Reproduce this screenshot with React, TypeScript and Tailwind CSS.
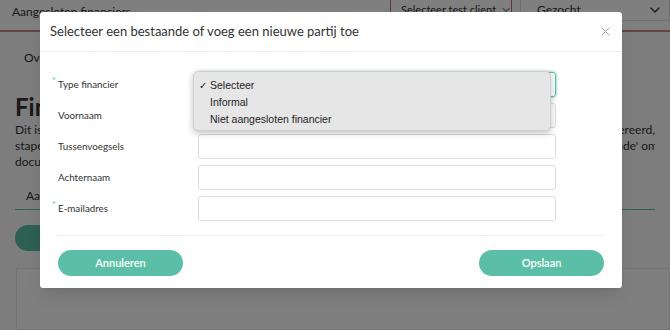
import { X, ChevronDown } from "lucide-react";

const fields = [
  { label: "Type financier", required: true },
  { label: "Voornaam", required: false },
  { label: "Tussenvoegsels", required: false },
  { label: "Achternaam", required: false },
  { label: "E-mailadres", required: true },
];

const options = ["Selecteer", "Informal", "Niet aangesloten financier"];

function BackgroundPage() {
  return (
    <div className="flex h-full w-full flex-col bg-[#fafafa] text-[#333]">
      <div className="flex h-[32px] shrink-0 items-start border-b-2 border-[#c98a8a] bg-white">
        <span className="mt-[3px] ml-[12px] text-[12px]">Aangesloten financiers</span>
        <div className="ml-auto flex">
          <div className="-mt-px flex h-[22px] w-[122px] items-center gap-1 whitespace-nowrap rounded-b border border-[#c96464] px-[10px] text-[11px]">
            Selecteer test client <ChevronDown className="h-3 w-3 shrink-0" />
          </div>
          <div className="ml-[8px] -mt-px flex h-[22px] w-[150px] items-center justify-between border border-[#ddd] pl-[16px] pr-[6px] text-[12px]">
            Gezocht <ChevronDown className="h-4 w-4" />
          </div>
        </div>
      </div>
      <div className="ml-[24px] mt-[18px] text-[12px] leading-[16px]">Overzicht</div>
      <div className="ml-[15px] mt-[29px] text-[24px] font-bold leading-none">Financiers</div>
      <div className="mx-[15px] mt-[3px] overflow-hidden whitespace-nowrap text-[12px] leading-[16px]">
        <div className="flex justify-end">
          <span className="mr-auto">Dit is het overzicht van de financiers</span>
          <span>waarvoor de documenten gegenereerd,</span>
        </div>
        <div className="flex justify-end">
          <span className="mr-auto">stapel voor stapel</span>
          <span className="-mr-[3px]">Klik op 'Volgende' om</span>
        </div>
        <div>documenten te genereren.</div>
      </div>
      <div className="mx-[15px] mt-[18px] border-b border-[#5bbfa7] pb-[5px] pl-[11px] text-[12px] leading-[16px]">
        Aangesloten
      </div>
      <div className="ml-[15px] mt-[15px] h-[26px] w-[120px] rounded-full bg-[#5bbfa7]" />
      <div className="ml-[16px] mt-[17px] flex-1 border border-[#e6e6e6] bg-white" />
    </div>
  );
}

function PartyModal() {
  return (
    <div className="absolute left-[40px] top-[12px] w-[582px] rounded-[3px] bg-white font-['Lato',sans-serif] text-[#333] shadow-lg">
      <div className="flex h-[40px] items-center justify-between border-b border-[#eee] pl-[10px] pr-[9px]">
        <h2 className="text-[13px]">Selecteer een bestaande of voeg een nieuwe partij toe</h2>
        <X className="h-[15px] w-[15px] text-[#999]" strokeWidth={1.4} />
      </div>
      <div className="relative px-[18px] pt-[20px]">
        <div className="flex flex-col gap-[6px]">
          {fields.map((f, i) => (
            <div key={f.label} className="flex items-center">
              <label className="relative w-[140px] text-[9.8px]">
                {f.required && (
                  <span className="absolute -left-[6px] -top-[3px] text-[9px] text-[#5bbfa7]">*</span>
                )}
                {f.label}
              </label>
              <div
                className={
                  i === 0
                    ? "h-[25px] w-[358px] rounded-[3px] border border-[#5bbfa7] shadow-[0_0_3px_#5bbfa7]"
                    : "h-[25px] w-[358px] rounded-[3px] border border-[#ddd]"
                }
              />
            </div>
          ))}
        </div>
        <div className="mt-[14px] border-t border-[#eee]" />
        <div className="flex justify-between pt-[14px] pb-[12px]">
          <button className="h-[26px] w-[125px] rounded-full bg-[#5bbfa7] text-[11px] font-semibold text-white">
            Annuleren
          </button>
          <button className="h-[26px] w-[125px] rounded-full bg-[#5bbfa7] text-[11px] font-semibold text-white">
            Opslaan
          </button>
        </div>

        {/* native select popup */}
        <div className="absolute left-[153px] top-[19px] w-[358px] rounded-[5px] border border-[#cfcfcf] bg-[#e6e6e6] pt-[5px] pb-[2px] font-['Liberation_Sans',sans-serif] text-[10.5px] text-[#222] shadow-[0_2px_6px_rgba(0,0,0,0.25)]">
          {options.map((o, i) => (
            <div key={o} className="flex h-[17px] items-center">
              <span className="w-[16px] pl-[5px] text-[10px]">{i === 0 ? "✓" : ""}</span>
              {o}
            </div>
          ))}
        </div>
      </div>
    </div>
  );
}

export default function App() {
  return (
    <div className="relative h-[330px] w-[670px] overflow-hidden font-['Lato',sans-serif]">
      <BackgroundPage />
      <div className="absolute inset-0 bg-black/50" />
      <PartyModal />
    </div>
  );
}
